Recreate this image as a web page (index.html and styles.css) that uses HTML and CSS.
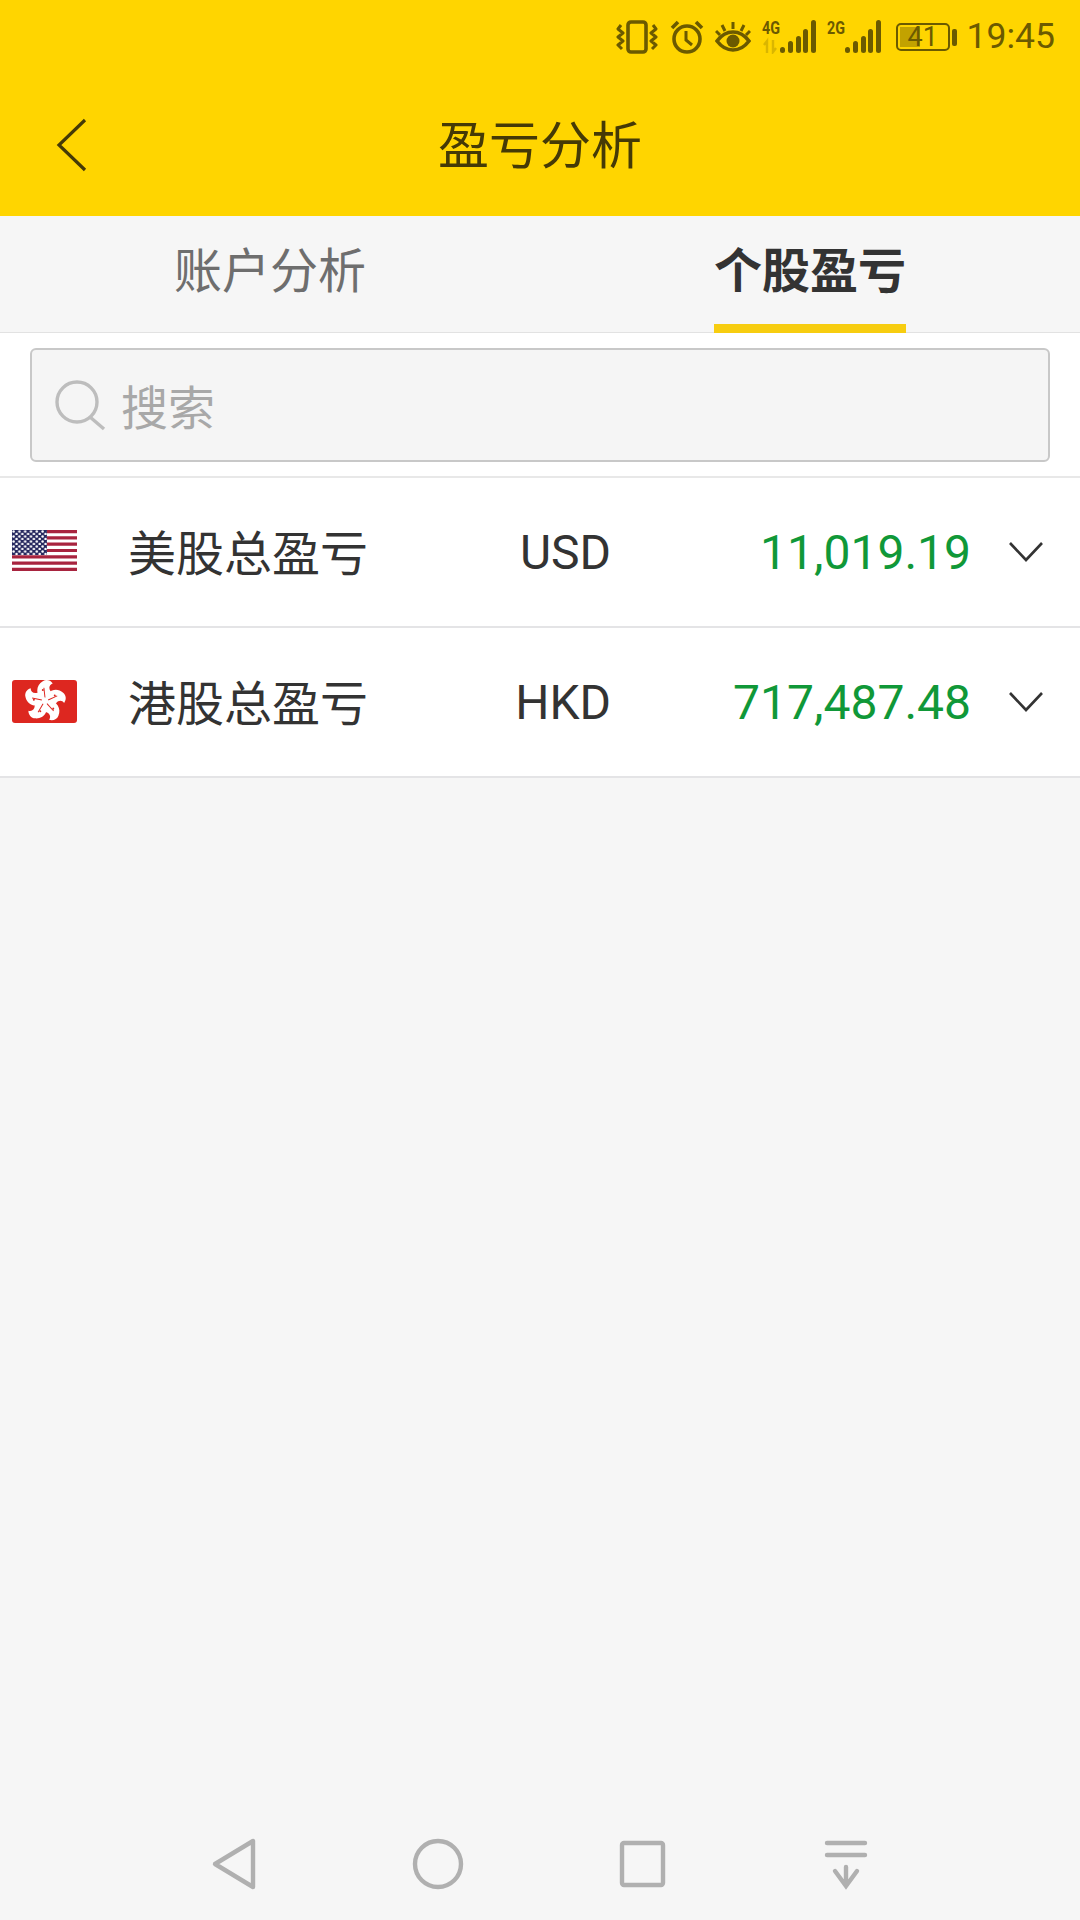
FILE: index.html
```html
<!DOCTYPE html>
<html lang="zh-CN">
<head>
    <meta charset="UTF-8">
    <meta name="viewport" content="width=device-width, initial-scale=1.0">
    <title>盈亏分析</title>
    <link rel="stylesheet" href="styles.css">
</head>
<body>

<header class="top">
    <div class="status-bar">
        <!-- 振动 -->
        <svg class="st-icon st-vibrate" width="42" height="34" viewBox="0 0 42 34" fill="none" stroke="#6b5a00" stroke-width="3.6" stroke-linejoin="round">
            <rect x="12" y="2" width="18" height="30" rx="3"/>
            <path d="M5 5L2 9l5 4-5 4 5 4-5 4 4 4M37 5l3 4-5 4 5 4-5 4 5 4-4 4" stroke-width="3"/>
        </svg>
        <!-- 闹钟 -->
        <svg class="st-icon" width="34" height="34" viewBox="0 0 34 34" fill="none" stroke="#6b5a00" stroke-width="3.6">
            <circle cx="17" cy="19" r="13"/>
            <path d="M16 11v9l6 5" stroke-width="3"/>
            <path d="M2 8l6-6M32 8l-6-6"/>
        </svg>
        <!-- 护眼 -->
        <svg class="st-icon" width="36" height="32" viewBox="0 0 36 32" fill="none" stroke="#6b5a00" stroke-width="3.6">
            <path d="M2 20c9-12 23-12 32 0-9 12-23 12-32 0z"/>
            <circle cx="18" cy="20" r="6.5" fill="#6b5a00" stroke="none"/>
            <path d="M18 1v7M7 4l3 6M29 4l-3 6M1 10l4 4M35 10l-4 4" stroke-width="3"/>
        </svg>
        <!-- 4G 信号 -->
        <svg class="st-icon st-signal sig-one" width="54" height="40" viewBox="0 -6 54 40" fill="#6b5a00">
            <text class="net" x="0" y="14" textLength="18" lengthAdjust="spacingAndGlyphs">4G</text>
            <path d="M5 33V21l-3 4M11 20v12l3-4" fill="none" stroke="#6b5a00" stroke-width="2.4" opacity="0.25"/>
            <rect x="18" y="27" width="5" height="6" rx="2.5"/>
            <rect x="26" y="21" width="5" height="12" rx="2.5"/>
            <rect x="34" y="16" width="5" height="17" rx="2.5"/>
            <rect x="41" y="9" width="5" height="24" rx="2.5"/>
            <rect x="49" y="0" width="5" height="33" rx="2.5"/>
        </svg>
        <!-- 2G 信号 -->
        <svg class="st-icon st-signal sig-two" width="54" height="40" viewBox="0 -6 54 40" fill="#6b5a00">
            <text class="net" x="0" y="14" textLength="18" lengthAdjust="spacingAndGlyphs">2G</text>
            <rect x="18" y="27" width="5" height="6" rx="2.5"/>
            <rect x="26" y="21" width="5" height="12" rx="2.5"/>
            <rect x="34" y="16" width="5" height="17" rx="2.5"/>
            <rect x="41" y="9" width="5" height="24" rx="2.5"/>
            <rect x="49" y="0" width="5" height="33" rx="2.5"/>
        </svg>
        <!-- 电量 -->
        <div class="battery">
            <div class="battery-body">
                <div class="battery-fill"></div>
                <span class="battery-num">41</span>
            </div>
            <div class="battery-tip"></div>
        </div>
        <span class="clock">19:45</span>
    </div>
    <div class="nav-bar">
        <svg class="back" width="32" height="54" viewBox="0 0 32 54" fill="none" stroke="#453a06" stroke-width="3.2">
            <path d="M29 2L3 27l26 25"/>
        </svg>
        <h1>盈亏分析</h1>
    </div>
</header>

<div class="tabs">
    <div class="tab"><span class="tab-label">账户分析</span></div>
    <div class="tab active"><span class="tab-label">个股盈亏</span></div>
</div>

<div class="search-wrap">
    <div class="search-box">
        <svg class="search-icon" width="52" height="52" viewBox="0 0 52 52" fill="none" stroke="#bdbdbd" stroke-width="3.4">
            <circle cx="23" cy="23" r="20"/>
            <path d="M36 38l14 12"/>
        </svg>
        <span class="search-text">搜索</span>
    </div>
</div>

<div class="list">
    <div class="row">
        <svg class="flag flag-us" width="65" height="41" viewBox="0 0 65 41">
            <defs>
                <pattern id="stars" width="5.8" height="5" patternUnits="userSpaceOnUse">
                    <circle cx="1.6" cy="1.4" r="1.25" fill="#fff"/>
                    <circle cx="4.5" cy="3.9" r="1.25" fill="#fff"/>
                </pattern>
            </defs>
            <rect width="65" height="41" rx="2" fill="#fff"/>
            <path d="M0 1.6h65M0 7.9h65M0 14.2h65M0 20.5h65M0 26.8h65M0 33.1h65M0 39.4h65" stroke="#a8243f" stroke-width="3.2"/>
            <rect width="35" height="25" fill="#27295f"/>
            <rect width="35" height="25" fill="url(#stars)"/>
        </svg>
        <span class="name">美股总盈亏</span>
        <span class="code">USD</span>
        <span class="value">11,019.19</span>
        <svg class="chevron" width="34" height="22" viewBox="0 0 34 22" fill="none" stroke="#333" stroke-width="2.6">
            <path d="M1 2l16 17L33 2"/>
        </svg>
    </div>
    <div class="row">
        <svg class="flag" width="65" height="43" viewBox="0 0 65 43">
            <rect width="65" height="43" rx="3" fill="#dd2720"/>
            <g transform="translate(33 21) scale(1.1)">
                <g id="petal">
                    <path fill="#fff" d="M0 0C-9-4-9-14-2-18c3-2 7-1 9 2-3 1-4 4-2 7 2 4-1 8-5 9z"/>
                    <path d="M0-3l-1-9" stroke="#dd2720" stroke-width="0.9"/>
                    <circle cx="-2" cy="-10" r="0.9" fill="#dd2720"/>
                </g>
                <use href="#petal" transform="rotate(72)"/>
                <use href="#petal" transform="rotate(144)"/>
                <use href="#petal" transform="rotate(216)"/>
                <use href="#petal" transform="rotate(288)"/>
            </g>
        </svg>
        <span class="name">港股总盈亏</span>
        <span class="code">HKD</span>
        <span class="value">717,487.48</span>
        <svg class="chevron" width="34" height="22" viewBox="0 0 34 22" fill="none" stroke="#333" stroke-width="2.6">
            <path d="M1 2l16 17L33 2"/>
        </svg>
    </div>
</div>

<div class="spacer"></div>

<footer class="sys-nav">
    <svg width="56" height="56" viewBox="0 0 56 56" fill="none" stroke="#b0b0b0" stroke-width="4.4" stroke-linejoin="round">
        <path d="M47 5v46L9 28z"/>
    </svg>
    <svg width="56" height="56" viewBox="0 0 56 56" fill="none" stroke="#b0b0b0" stroke-width="4.4">
        <circle cx="28" cy="28" r="23"/>
    </svg>
    <svg width="56" height="56" viewBox="0 0 56 56" fill="none" stroke="#b0b0b0" stroke-width="4.4" stroke-linejoin="round">
        <rect x="8" y="7" width="41" height="42" rx="2"/>
    </svg>
    <svg width="56" height="56" viewBox="0 0 56 56" fill="none" stroke="#b0b0b0" stroke-width="4.4" stroke-linecap="round">
        <path d="M9 7h38M9 19h38M28 31v18M17 35l11 15 11-15" />
    </svg>
</footer>

</body>
</html>
```

FILE: styles.css
```css
html, body {
    margin: 0;
    padding: 0;
}
body {
    width: 1080px;
    height: 1920px;
    display: flex;
    flex-direction: column;
    background-color: #f6f6f6;
    font-family: Roboto, "Noto Sans CJK SC", sans-serif;
    overflow: hidden;
}
.top {
    background-color: #ffd500;
    height: 216px;
    flex-shrink: 0;
}
.status-bar {
    height: 70px;
    display: flex;
    justify-content: flex-end;
    align-items: center;
    padding: 2px 25px 0 0;
    box-sizing: border-box;
    color: #6b5a00;
}
.st-icon {
    display: block;
    margin-right: 11px;
    margin-top: 2px;
}
.st-vibrate {
    margin-right: 12px;
}
.st-signal {
    margin-top: -4px;
}
.sig-one {
    margin-right: 11px;
}
.sig-two {
    margin-right: 15px;
}
.net {
    font-family: Roboto, sans-serif;
    font-size: 18px;
    font-weight: 700;
}
.battery {
    display: flex;
    align-items: center;
    margin-right: 10px;
    margin-top: 2px;
}
.battery-body {
    position: relative;
    width: 54px;
    height: 28px;
    border: 2px solid #6b5a00;
    border-radius: 5px;
    box-sizing: border-box;
    padding: 2px;
}
.battery-fill {
    width: 20px;
    height: 100%;
    background-color: #c2a200;
}
.battery-num {
    position: absolute;
    left: 10px;
    top: 0;
    font-size: 27px;
    line-height: 24px;
    color: #6b5a00;
}
.battery-tip {
    width: 5px;
    height: 17px;
    margin-left: 2px;
    border-radius: 2px;
    background-color: #6b5a00;
}
.clock {
    font-size: 35.5px;
    line-height: 40px;
}
.nav-bar {
    position: relative;
    height: 146px;
    display: flex;
    align-items: center;
    justify-content: center;
}
.nav-bar h1 {
    margin: 0 0 2px;
    font-size: 51px;
    font-weight: 400;
    color: #453a06;
}
.back {
    position: absolute;
    left: 56px;
    top: 48px;
}
.tabs {
    height: 117px;
    display: flex;
    flex-shrink: 0;
    box-sizing: border-box;
    border-bottom: 1px solid #e2e2e2;
}
.tab {
    flex: 1;
    display: flex;
    justify-content: center;
    font-size: 48px;
    color: #6e6e6e;
}
.tab-label {
    box-sizing: border-box;
    height: 117px;
    padding-top: 26px;
    line-height: 60px;
}
.tab.active {
    color: #333;
    font-weight: 700;
}
.tab.active .tab-label {
    border-bottom: 9px solid #f7cd10;
}
.search-wrap {
    background-color: #fff;
    padding: 15px 30px 14px;
    border-bottom: 2px solid #e8e8e8;
    flex-shrink: 0;
}
.search-box {
    height: 114px;
    box-sizing: border-box;
    display: flex;
    align-items: center;
    padding-left: 22px;
    background-color: #f5f5f5;
    border: 2px solid #c8c8c8;
    border-radius: 6px;
}
.search-icon {
    margin-right: 15px;
}
.search-text {
    font-size: 47px;
    color: #a8a8a8;
    margin-bottom: 2px;
}
.list {
    background-color: #fff;
    flex-shrink: 0;
}
.row {
    height: 150px;
    box-sizing: border-box;
    display: flex;
    align-items: center;
    padding: 0 37px 0 12px;
    border-bottom: 2px solid #e4e4e6;
    color: #333;
}
.flag {
    flex-shrink: 0;
    margin-right: 51px;
    margin-bottom: 1px;
}
.flag-us {
    margin-bottom: 3px;
}
.name {
    font-size: 48px;
    width: 241px;
    margin-bottom: 4px;
}
.code {
    font-size: 48px;
    width: 242px;
    text-align: right;
}
.value {
    flex: 1;
    text-align: right;
    font-size: 48px;
    color: #109838;
}
.chevron {
    margin-left: 38px;
    flex-shrink: 0;
}
.spacer {
    flex: 1;
}
.sys-nav {
    height: 112px;
    flex-shrink: 0;
    display: flex;
    justify-content: center;
    align-items: center;
    gap: 148px;
}
```
